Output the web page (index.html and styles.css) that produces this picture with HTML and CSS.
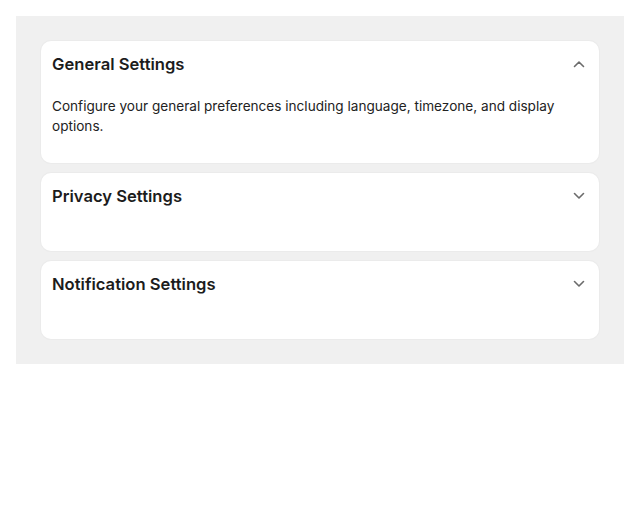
FILE: index.html
```html
<!DOCTYPE html>
<html lang="en">
<head>
<meta charset="utf-8">
<title>Settings</title>
<link rel="stylesheet" href="styles.css">
</head>
<body>
<div class="panel">
  <section class="card">
    <div class="card-header">
      <h2 class="card-title">General Settings</h2>
      <svg class="chev" width="12" height="8" viewBox="0 0 12 8"><path d="M1.5 6.5 L6 2 L10.5 6.5" fill="none" stroke="#6b6b6b" stroke-width="1.6" stroke-linecap="round" stroke-linejoin="round"/></svg>
    </div>
    <div class="card-body">
      <p class="card-text">Configure your general preferences including language, timezone, and display options.</p>
    </div>
  </section>
  <section class="card">
    <div class="card-header">
      <h2 class="card-title">Privacy Settings</h2>
      <svg class="chev" width="12" height="8" viewBox="0 0 12 8"><path d="M1.5 1.5 L6 6 L10.5 1.5" fill="none" stroke="#6b6b6b" stroke-width="1.6" stroke-linecap="round" stroke-linejoin="round"/></svg>
    </div>
    <div class="card-empty"></div>
  </section>
  <section class="card">
    <div class="card-header">
      <h2 class="card-title">Notification Settings</h2>
      <svg class="chev" width="12" height="8" viewBox="0 0 12 8"><path d="M1.5 1.5 L6 6 L10.5 1.5" fill="none" stroke="#6b6b6b" stroke-width="1.6" stroke-linecap="round" stroke-linejoin="round"/></svg>
    </div>
    <div class="card-empty"></div>
  </section>
</div>
</body>
</html>
```
FILE: styles.css
```css
html, body { margin: 0; padding: 0; background: #ffffff; }
body {
  padding: 16px;
  font-family: Inter, "Liberation Sans", sans-serif;
  color: #1c1c1c;
}
.panel {
  background: #f0f0f0;
  padding: 25px;
  display: flex;
  flex-direction: column;
  gap: 10px;
}
.card {
  background: #ffffff;
  border-radius: 10px;
  box-shadow: 0 0 0 1px #ebebeb;
  padding: 0 11px;
}
.card-header {
  height: 46px;
  display: flex;
  align-items: center;
  justify-content: space-between;
}
.card-title {
  margin: 0;
  font-size: 16.6px;
  font-weight: 600;
  line-height: 22px;
  color: #1c1c1c;
}
.chev { margin-right: 3px; }
.card-body { padding: 9px 0 27px; }
.card-text {
  margin: 0;
  font-size: 13.6px;
  line-height: 20px;
  color: #222222;
}
.card-empty { height: 32px; }
```
